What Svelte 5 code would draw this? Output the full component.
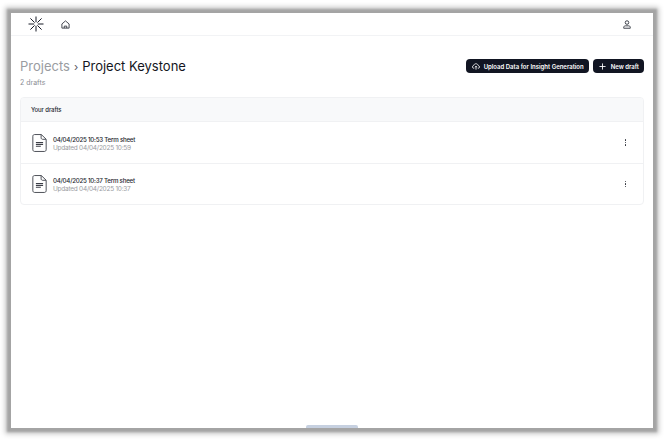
<script>
	const drafts = [
		{ title: '04/04/2025 10:53 Term sheet', updated: 'Updated 04/04/2025 10:59' },
		{ title: '04/04/2025 10:37 Term sheet', updated: 'Updated 04/04/2025 10:37' }
	];
</script>

<div class="page">
	<div class="window">
		<header class="topbar">
			<div class="topbar-left">
				<svg class="logo" width="16" height="16" viewBox="0 0 16 16" fill="none" stroke="#161a26" stroke-width="1" aria-hidden="true">
					<path d="M8 0.5V6.2M8 9.8V15.5M0.5 8H6.2M9.8 8H15.5M2.4 2.4L6.6 6.6M9.4 9.4L13.6 13.6M13.6 2.4L9.4 6.6M6.6 9.4L2.4 13.6" />
				</svg>
				<svg class="home" width="9" height="9" viewBox="0 0 10 10" fill="none" stroke="#33373f" stroke-width="1" aria-hidden="true">
					<path d="M1 4.4L5 1L9 4.4V9H1Z" stroke-linejoin="round" />
					<path d="M3.6 9V6.8H6.4V9" />
				</svg>
			</div>
			<svg width="8" height="9" viewBox="0 0 9 10" fill="none" stroke="#2a2e38" stroke-width="1" aria-hidden="true">
				<circle cx="4.5" cy="2.8" r="2" />
				<path d="M0.8 9.2V8.2C0.8 7 1.8 6.5 2.8 6.5H6.2C7.2 6.5 8.2 7 8.2 8.2V9.2Z" stroke-linejoin="round" />
			</svg>
		</header>

		<main class="content">
			<div class="title-row">
				<div>
					<h1><span class="crumb">Projects</span><span class="sep">›</span>Project Keystone</h1>
					<p class="count">2 drafts</p>
				</div>
				<div class="actions">
					<button type="button" class="btn">
						<svg width="8" height="7" viewBox="0 0 11 9" fill="none" stroke="#fff" stroke-width="1.1" aria-hidden="true">
							<path d="M3 7H2.6C1.4 7 .6 6.1 .6 5C.6 4 1.3 3.2 2.3 3.1C2.6 1.7 3.9 .7 5.4 .7C7 .7 8.3 1.8 8.6 3.2C9.6 3.3 10.4 4.1 10.4 5.1C10.4 6.2 9.5 7 8.4 7H8" />
							<path d="M5.5 8.8V4.2M3.9 5.6L5.5 4.1L7.1 5.6" />
						</svg>
						Upload Data for Insight Generation
					</button>
					<button type="button" class="btn new">
						<svg width="7" height="7" viewBox="0 0 8 8" fill="none" stroke="#fff" stroke-width="1" aria-hidden="true">
							<path d="M4 0.5V7.5M0.5 4H7.5" />
						</svg>
						New draft
					</button>
				</div>
			</div>

			<section class="card">
				<div class="card-head">Your drafts</div>
				{#each drafts as draft}
					<div class="row">
						<svg class="doc" width="15" height="18" viewBox="0 0 16 20" fill="none" stroke="#3c3f47" stroke-width="1" aria-hidden="true">
							<path d="M2.5 .6H10L15.4 5.8V17.4C15.4 18.5 14.6 19.4 13.5 19.4H2.5C1.4 19.4 .6 18.5 .6 17.4V2.5C.6 1.4 1.4 .6 2.5 .6Z" stroke-linejoin="round" />
							<path d="M9.8 .8V4.2C9.8 5.2 10.5 5.9 11.5 5.9H15.2" />
							<path d="M4 9.6H12M4 11.6H12M4 13.6H9.5" stroke-width="1.2" />
						</svg>
						<div class="meta">
							<div class="title">{draft.title}</div>
							<div class="updated">{draft.updated}</div>
						</div>
						<div class="dots" aria-hidden="true"><i></i><i></i><i></i></div>
					</div>
				{/each}
			</section>
		</main>

		<div class="handle"></div>
	</div>
</div>

<style>
	:global(body) {
		background: #fff;
	}
	.page {
		width: 670px;
		height: 440px;
		box-sizing: border-box;
		padding: 13px 17px 12px 11px;
		overflow: hidden;
		font-family: Inter, "Liberation Sans", sans-serif;
	}
	.window {
		position: relative;
		height: 100%;
		background: #fff;
		box-shadow: 0 0 2px 4px #a4a4a4, 0 0 5px 6px #c8c8c8;
		display: flex;
		flex-direction: column;
	}
	.topbar {
		height: 23px;
		box-sizing: border-box;
		flex: none;
		display: flex;
		align-items: center;
		justify-content: space-between;
		padding: 0 22px 0 17px;
		border-bottom: 1px solid #f2f3f5;
	}
	.topbar-left {
		display: flex;
		align-items: center;
		gap: 17px;
	}
	.content {
		padding: 21px 9px 0;
	}
	.title-row {
		display: flex;
		justify-content: space-between;
		align-items: flex-start;
	}
	h1 {
		margin: 0;
		font-size: 13px;
		line-height: 18px;
		font-weight: 400;
		color: #14161d;
	}
	.crumb {
		color: #9a9ca1;
	}
	.sep {
		margin: 0 4px;
		color: #55585f;
		font-size: 11px;
	}
	.count {
		margin: 2px 0 0;
		font-size: 7px;
		line-height: 10px;
		color: #8b8e94;
	}
	.actions {
		display: flex;
		gap: 4px;
		margin-top: 2px;
	}
	.btn {
		display: inline-flex;
		align-items: center;
		gap: 4px;
		height: 14px;
		padding: 0 5px 0 6px;
		border: none;
		border-radius: 4px;
		background: #111522;
		color: #fff;
		font: 600 6px Inter, "Liberation Sans", sans-serif;
		white-space: nowrap;
	}
	.btn.new {
		gap: 5px;
		padding: 0 5px 0 6px;
	}
	.card {
		margin-top: 9px;
		border: 1px solid #f0f1f3;
		border-radius: 4px;
		overflow: hidden;
	}
	.card-head {
		height: 24px;
		box-sizing: border-box;
		padding-left: 10px;
		display: flex;
		align-items: center;
		background: #f8f9fa;
		border-bottom: 1px solid #f0f1f3;
		font-size: 6px;
		letter-spacing: -0.1px;
		font-weight: 500;
		color: #23262e;
	}
	.row {
		height: 41px;
		box-sizing: border-box;
		display: flex;
		align-items: center;
		padding: 0 17px 0 11px;
	}
	.row + .row {
		border-top: 1px solid #f0f1f3;
		height: 41px;
	}
	.doc {
		flex: none;
		margin-right: 6px;
	}
	.meta {
		flex: 1;
		margin-top: 3px;
	}
	.title {
		font-size: 6.2px;
		letter-spacing: -0.25px;
		line-height: 8px;
		font-weight: 500;
		color: #23262e;
	}
	.updated {
		font-size: 6.5px;
		letter-spacing: -0.25px;
		line-height: 9px;
		color: #9a9ca1;
	}
	.dots {
		display: flex;
		flex-direction: column;
		gap: 1px;
	}
	.dots i {
		display: block;
		width: 1.5px;
		height: 1.5px;
		background: #2b2e36;
		border-radius: 50%;
	}
	.handle {
		position: absolute;
		left: 295px;
		bottom: 0;
		width: 52px;
		height: 3px;
		background: #c6d0e0;
		border-radius: 2px 2px 0 0;
	}
</style>
